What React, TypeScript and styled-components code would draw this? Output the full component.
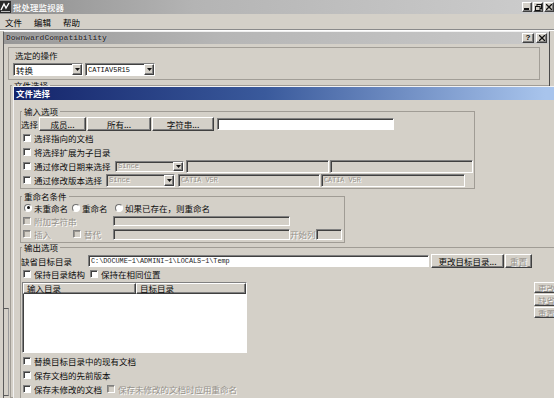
import styled, { createGlobalStyle, css } from 'styled-components';

const FACE = '#d4d0c8';
const CJK = '"Noto Sans CJK SC", "Liberation Sans", sans-serif';
const MONO = '"Liberation Mono", "DejaVu Sans Mono", monospace';

const GlobalStyle = createGlobalStyle`
  html, body { margin: 0; padding: 0; background: ${FACE}; overflow: hidden; }
  body { font-family: ${CJK}; font-size: 8.5px; color: #0c0c0c; }
  * { box-sizing: border-box; }
`;

const raised = css`
  border: 1px solid;
  border-color: #fff #404040 #404040 #fff;
  box-shadow: inset -1px -1px 0 #808080;
  background: ${FACE};
`;

const sunken = css`
  border: 1px solid;
  border-color: #808080 #fff #fff #808080;
  box-shadow: inset 1px 1px 0 #404040;
`;

const disabledText = css`
  color: #96928b;
  text-shadow: 1px 1px 0 #fff;
`;

const Screen = styled.div`
  position: relative;
  width: 554px;
  height: 398px;
  overflow: hidden;
  background: ${FACE};
  display: flex;
  flex-direction: column;
`;

const MainTitle = styled.div`
  height: 14px;
  flex: none;
  display: flex;
  align-items: center;
  background: linear-gradient(to right, #8e8e8e, #b4b4b4 35%, #cdcdcd);
`;

const MainTitleText = styled.span`
  margin-left: 2px;
  color: #f4f4f4;
  font-weight: 700;
  line-height: 14px;
  text-shadow: 0 0 1px #777;
`;

const CaptionButtons = styled.div<{ $gap: number; $right: number }>`
  margin-left: auto;
  margin-right: ${(p) => p.$right}px;
  display: flex;
  gap: ${(p) => p.$gap}px;
`;

const CaptionButton = styled.div<{ $w: number }>`
  ${raised};
  width: ${(p) => p.$w}px;
  height: 10px;
  display: flex;
  align-items: center;
  justify-content: center;
  font-family: "Liberation Sans", sans-serif;
  font-weight: 700;
  font-size: 8px;
  line-height: 8px;
`;

const MenuBar = styled.div`
  height: 16px;
  flex: none;
  display: flex;
  align-items: center;
  gap: 12px;
  padding: 1px 0 0 5px;
  border-bottom: 1px solid #8a8a8a;
  box-shadow: 0 1px 0 #fff;
`;

const MenuItem = styled.span`
  line-height: 12px;
  color: #000;
`;

const ChildWindow = styled.div`
  margin: 1px 0 0 3px;
  width: 547px;
  flex: 1;
  display: flex;
  flex-direction: column;
  border-left: 1px solid #5e5e5e;
  border-right: 1px solid #4a4a4a;
  border-top: 1px solid #f0f0f0;
`;

const ChildTitle = styled.div`
  height: 12px;
  flex: none;
  display: flex;
  align-items: center;
  background: linear-gradient(to right, #979797, #b6b6b6 40%, #c9c9c9);
`;

const ChildTitleText = styled.span`
  margin-left: 2px;
  font-family: ${MONO};
  font-size: 8px;
  font-weight: 700;
  line-height: 12px;
  color: #3c3c3c;
  text-shadow: 0 0 1px #eee;
`;

const OperationBox = styled.div`
  margin: 3px 0 0 4px;
  width: 532px;
  border: 1px solid #a29e97;
  padding: 2px 0 3px 4px;
`;

const BoxLabel = styled.div`
  margin-left: 2px;
  line-height: 10px;
`;

const ComboRow = styled.div`
  margin-top: 3px;
  display: flex;
  gap: 2px;
`;

const ComboBox = styled.div<{ $w: number; $h: number; $disabled?: boolean }>`
  ${sunken};
  width: ${(p) => p.$w}px;
  height: ${(p) => p.$h}px;
  flex: none;
  display: flex;
  background: ${(p) => (p.$disabled ? FACE : '#fff')};
`;

const ComboText = styled.span<{ $mono?: boolean; $disabled?: boolean }>`
  flex: 1;
  padding-left: 2px;
  overflow: hidden;
  white-space: nowrap;
  display: flex;
  align-items: center;
  font-family: ${(p) => (p.$mono ? MONO : CJK)};
  font-size: ${(p) => (p.$mono ? '7px' : '8.5px')};
  ${(p) => p.$disabled && disabledText};
`;

const ComboArrow = styled.div`
  ${raised};
  width: 10px;
  flex: none;
  display: flex;
  align-items: center;
  justify-content: center;
`;

const LowerArea = styled.div`
  flex: 1;
  display: flex;
`;

const Gutter = styled.div`
  width: 6px;
  flex: none;
  display: flex;
  flex-direction: column;
  justify-content: flex-end;
`;

const GutterTrack = styled.div`
  width: 6px;
  height: 88px;
  margin: 0 0 2px -1px;
  border: 1px solid #5a5a5a;
  border-right-color: #9a9a9a;
`;

const Group = styled.fieldset<{ $w: number; $mt?: number; $grow?: boolean }>`
  margin: ${(p) => p.$mt ?? 0}px 0 0 0;
  padding: 0 0 1px 0;
  min-width: 0;
  width: ${(p) => p.$w}px;
  border: 1px solid #a09c95;
  flex: ${(p) => (p.$grow ? 1 : 'none')};
`;

const Legend = styled.legend`
  padding: 0 2px;
  margin-left: 1px;
  line-height: 10px;
  font-size: 8.5px;
`;

const Dialog = styled.div`
  position: absolute;
  left: 13px;
  top: 86px;
  width: 560px;
  height: 320px;
  display: flex;
  flex-direction: column;
  border-left: 1px solid #f2f2f2;
  border-top: 1px solid #f2f2f2;
  background: ${FACE};
`;

const DialogTitle = styled.div`
  height: 13px;
  flex: none;
  display: flex;
  align-items: center;
  padding-left: 2px;
  background: linear-gradient(to right, #14246a, #3a5a9c 45%, #a8c4ec 95%);
  color: #fff;
  font-weight: 700;
  line-height: 13px;
`;

const DialogBody = styled.div`
  flex: 1;
  display: flex;
  flex-direction: column;
  padding-left: 6px;
`;

const Row = styled.div<{ $h: number; $mt?: number; $pl?: number }>`
  height: ${(p) => p.$h}px;
  margin-top: ${(p) => p.$mt ?? 0}px;
  padding-left: ${(p) => p.$pl ?? 0}px;
  display: flex;
  align-items: center;
  flex: none;
`;

const Label = styled.span<{ $w?: number; $disabled?: boolean }>`
  width: ${(p) => (p.$w ? `${p.$w}px` : 'auto')};
  flex: none;
  white-space: nowrap;
  line-height: 10px;
  ${(p) => p.$disabled && disabledText};
`;

const PushButton = styled.div<{ $w: number; $h: number; $ml?: number; $disabled?: boolean }>`
  ${raised};
  width: ${(p) => p.$w}px;
  height: ${(p) => p.$h}px;
  margin-left: ${(p) => p.$ml ?? 0}px;
  flex: none;
  display: flex;
  align-items: center;
  justify-content: center;
  white-space: nowrap;
  overflow: hidden;
  line-height: 10px;
  ${(p) => p.$disabled && disabledText};
`;

const Field = styled.div<{ $w: number; $h: number; $ml?: number; $white?: boolean }>`
  ${sunken};
  width: ${(p) => p.$w}px;
  height: ${(p) => p.$h}px;
  margin-left: ${(p) => p.$ml ?? 0}px;
  flex: none;
  display: flex;
  align-items: center;
  padding-left: 2px;
  overflow: hidden;
  white-space: nowrap;
  background: ${(p) => (p.$white ? '#fff' : FACE)};
`;

const FieldText = styled.span<{ $disabled?: boolean }>`
  font-family: ${MONO};
  font-size: 6.8px;
  color: #222;
  ${(p) => p.$disabled && disabledText};
`;

const Check = styled.span<{ $disabled?: boolean; $ml?: number }>`
  ${sunken};
  width: 8px;
  height: 8px;
  flex: none;
  margin: 0 3px 0 ${(p) => p.$ml ?? 0}px;
  background: ${(p) => (p.$disabled ? FACE : '#fff')};
  ${(p) => p.$disabled && 'box-shadow: inset 1px 1px 0 #9a968f;'};
`;

const Radio = styled.span<{ $on?: boolean }>`
  width: 8px;
  height: 8px;
  flex: none;
  margin-right: 2px;
  border-radius: 50%;
  border: 1px solid;
  border-color: #707070 #fff #fff #707070;
  background: #fff;
  display: flex;
  align-items: center;
  justify-content: center;
  &::after {
    content: '';
    width: 3px;
    height: 3px;
    border-radius: 50%;
    background: ${(p) => (p.$on ? '#111' : 'transparent')};
  }
`;

const RadioItem = styled.span<{ $w?: number }>`
  width: ${(p) => (p.$w ? `${p.$w}px` : 'auto')};
  display: flex;
  align-items: center;
  flex: none;
`;

const ListRow = styled.div`
  height: 71px;
  margin-top: 2px;
  display: flex;
  flex: none;
`;

const ListView = styled.div`
  ${sunken};
  width: 225px;
  margin-left: 1px;
  background: #fff;
  display: flex;
  flex-direction: column;
`;

const ListHeader = styled.div`
  height: 11px;
  display: flex;
  flex: none;
`;

const HeaderCell = styled.div<{ $w?: number }>`
  ${raised};
  width: ${(p) => (p.$w ? `${p.$w}px` : 'auto')};
  flex: ${(p) => (p.$w ? 'none' : 1)};
  padding-left: 3px;
  line-height: 9px;
`;

const SideButtons = styled.div`
  margin-left: auto;
  width: 25px;
  display: flex;
  flex-direction: column;
  gap: 1px;
`;

const Arrow = () => (
  <svg width="5" height="3" viewBox="0 0 5 3">
    <polygon points="0,0 5,0 2.5,3" fill="#111" />
  </svg>
);

function Combo({
  width,
  height,
  value,
  mono,
  disabled,
}: {
  width: number;
  height: number;
  value: string;
  mono?: boolean;
  disabled?: boolean;
}) {
  return (
    <ComboBox $w={width} $h={height} $disabled={disabled}>
      <ComboText $mono={mono} $disabled={disabled}>
        {value}
      </ComboText>
      <ComboArrow>
        <Arrow />
      </ComboArrow>
    </ComboBox>
  );
}

const AppIcon = () => (
  <svg width="11" height="12" viewBox="0 0 11 12">
    <rect x="0" y="0" width="11" height="12" fill="#2a2a2a" />
    <path d="M1 9 L4 3 L6 7 L9 2" stroke="#fff" strokeWidth="1.4" fill="none" />
    <rect x="1" y="10" width="9" height="1" fill="#bbb" />
  </svg>
);

export default function App() {
  return (
    <>
      <GlobalStyle />
      <Screen>
        <MainTitle>
          <AppIcon />
          <MainTitleText>批处理监视器</MainTitleText>
          <CaptionButtons $gap={1} $right={0}>
            <CaptionButton $w={10}>
              <svg width="6" height="6" viewBox="0 0 6 6">
                <rect x="0" y="4" width="5" height="2" fill="#111" />
              </svg>
            </CaptionButton>
            <CaptionButton $w={10}>
              <svg width="7" height="7" viewBox="0 0 7 7">
                <rect x="2" y="0.5" width="4.5" height="4" fill="none" stroke="#111" />
                <rect x="0.5" y="2.5" width="4.5" height="4" fill={FACE} stroke="#111" />
              </svg>
            </CaptionButton>
            <CaptionButton $w={10}>
              <svg width="6" height="6" viewBox="0 0 6 6">
                <path d="M0 0 L6 6 M6 0 L0 6" stroke="#111" strokeWidth="1.3" />
              </svg>
            </CaptionButton>
          </CaptionButtons>
        </MainTitle>

        <MenuBar>
          <MenuItem>文件</MenuItem>
          <MenuItem>编辑</MenuItem>
          <MenuItem>帮助</MenuItem>
        </MenuBar>

        <ChildWindow>
          <ChildTitle>
            <ChildTitleText>DownwardCompatibility</ChildTitleText>
            <CaptionButtons $gap={2} $right={2}>
              <CaptionButton $w={12}>?</CaptionButton>
              <CaptionButton $w={11}>
                <svg width="6" height="6" viewBox="0 0 6 6">
                  <path d="M0 0 L6 6 M6 0 L0 6" stroke="#111" strokeWidth="1.3" />
                </svg>
              </CaptionButton>
            </CaptionButtons>
          </ChildTitle>

          <OperationBox>
            <BoxLabel>选定的操作</BoxLabel>
            <ComboRow>
              <Combo width={70} height={13} value="转换" />
              <Combo width={70} height={13} value="CATIAV5R15" mono />
            </ComboRow>
          </OperationBox>

          <LowerArea>
            <Gutter>
              <GutterTrack />
            </Gutter>
            <Group $w={530} $grow>
              <Legend>文件选择</Legend>
            </Group>
          </LowerArea>
        </ChildWindow>

        <Dialog>
          <DialogTitle>文件选择</DialogTitle>
          <DialogBody>
            <Group $w={455} $mt={6}>
              <Legend>输入选项</Legend>
              <Row $h={14} $mt={1}>
                <Label $w={18}>选择</Label>
                <PushButton $w={47} $h={14}>成员...</PushButton>
                <PushButton $w={64} $h={14} $ml={1}>所有...</PushButton>
                <PushButton $w={62} $h={14} $ml={1}>字符串...</PushButton>
                <Field $w={177} $h={12} $ml={3} $white />
              </Row>
              <Row $h={14} $pl={2}>
                <Check />
                <Label>选择指向的文档</Label>
              </Row>
              <Row $h={14} $pl={2}>
                <Check />
                <Label>将选择扩展为子目录</Label>
              </Row>
              <Row $h={14} $pl={2}>
                <Check />
                <Label $w={81}>通过修改日期来选择</Label>
                <Combo width={69} height={11} value="Since" mono disabled />
                <Field $w={143} $h={13} $ml={2} />
                <Field $w={143} $h={13} $ml={1} />
              </Row>
              <Row $h={14} $pl={2}>
                <Check />
                <Label $w={72}>通过修改版本选择</Label>
                <Combo width={69} height={13} value="Since" mono disabled />
                <Field $w={142} $h={13} $ml={3}>
                  <FieldText $disabled>CATIA V5R</FieldText>
                </Field>
                <Field $w={144} $h={13} $ml={1}>
                  <FieldText $disabled>CATIA V5R</FieldText>
                </Field>
              </Row>
            </Group>

            <Group $w={325} $mt={2}>
              <Legend>重命名条件</Legend>
              <Row $h={13} $pl={3}>
                <RadioItem $w={48}>
                  <Radio $on />
                  <Label>未重命名</Label>
                </RadioItem>
                <RadioItem $w={43}>
                  <Radio />
                  <Label>重命名</Label>
                </RadioItem>
                <RadioItem>
                  <Radio />
                  <Label>如果已存在，则重命名</Label>
                </RadioItem>
              </Row>
              <Row $h={13} $pl={2}>
                <Check $disabled />
                <Label $w={79} $disabled>
                  附加字符串
                </Label>
                <Field $w={177} $h={10} />
              </Row>
              <Row $h={14} $pl={2}>
                <Check $disabled />
                <Label $w={38} $disabled>
                  插入
                </Label>
                <Check $disabled $ml={1} />
                <Label $w={29} $disabled>
                  替代
                </Label>
                <Field $w={177} $h={11} />
                <Label $w={26} $disabled>
                  开始列
                </Label>
                <Field $w={26} $h={11} />
              </Row>
            </Group>

            <Group $w={540} $mt={-1} $grow>
              <Legend>输出选项</Legend>
              <Row $h={15} $mt={1}>
                <Label $w={67}>缺省目标目录</Label>
                <Field $w={341} $h={12} $white>
                  <FieldText>C:\DOCUME~1\ADMINI~1\LOCALS~1\Temp</FieldText>
                </Field>
                <PushButton $w={73} $h={14} $ml={2}>
                  更改目标目录...
                </PushButton>
                <PushButton $w={27} $h={14} $ml={1} $disabled>
                  重置
                </PushButton>
              </Row>
              <Row $h={12} $pl={2}>
                <Check />
                <Label $w={56}>保持目录结构</Label>
                <Check />
                <Label>保持在相同位置</Label>
              </Row>
              <ListRow>
                <ListView>
                  <ListHeader>
                    <HeaderCell $w={113}>输入目录</HeaderCell>
                    <HeaderCell>目标目录</HeaderCell>
                  </ListHeader>
                </ListView>
                <SideButtons>
                  <PushButton $w={25} $h={11} $disabled>更改</PushButton>
                  <PushButton $w={25} $h={12} $disabled>缺省</PushButton>
                  <PushButton $w={25} $h={11} $disabled>重置</PushButton>
                </SideButtons>
              </ListRow>
              <Row $h={14} $mt={1} $pl={2}>
                <Check />
                <Label>替换目标目录中的现有文档</Label>
              </Row>
              <Row $h={14} $pl={2}>
                <Check />
                <Label>保存文档的先前版本</Label>
              </Row>
              <Row $h={14} $pl={2}>
                <Check />
                <Label $w={73}>保存未修改的文档</Label>
                <Check $disabled />
                <Label $disabled>保存未修改的文档时应用重命名</Label>
              </Row>
            </Group>
          </DialogBody>
        </Dialog>
      </Screen>
    </>
  );
}
